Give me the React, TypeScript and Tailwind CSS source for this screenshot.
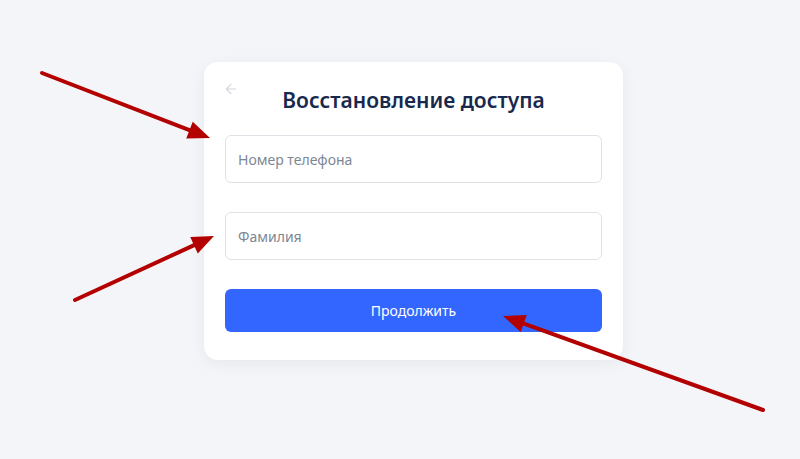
import { ArrowLeft } from "lucide-react";

const Arrow = ({ x1, y1, x2, y2 }: { x1: number; y1: number; x2: number; y2: number }) => {
  const dx = x2 - x1;
  const dy = y2 - y1;
  const len = Math.hypot(dx, dy);
  const ux = dx / len;
  const uy = dy / len;
  // arrow head
  const hl = 22;
  const hw = 9;
  const bx = x2 - ux * hl;
  const by = y2 - uy * hl;
  const p1 = `${bx - uy * hw},${by + ux * hw}`;
  const p2 = `${bx + uy * hw},${by - ux * hw}`;
  return (
    <g>
      <line x1={x1} y1={y1} x2={bx + ux * 2} y2={by + uy * 2} stroke="#b30000" strokeWidth={4} strokeLinecap="round" />
      <polygon points={`${x2},${y2} ${p1} ${p2}`} fill="#b30000" />
    </g>
  );
};

const App = () => {
  return (
    <div className="relative w-[800px] h-[459px] bg-[#f4f5f8] overflow-hidden" style={{ fontFamily: '"Noto Sans", sans-serif' }}>
      <div className="flex justify-center pt-[62px] pl-[27px]">
        {/* Card */}
        <div className="w-[419px] bg-white rounded-[14px] shadow-[0_4px_16px_rgba(30,40,70,0.06)] px-[21px] pt-[22px] pb-[28px]">
          <div className="relative flex justify-center h-[32px]">
            <ArrowLeft className="absolute left-[-2px] top-[-3px] text-[#cfd4dc]" size={16} strokeWidth={1.6} />
            <h1 className="text-[21px] leading-[32px] font-semibold text-[#18294d]">Восстановление доступа</h1>
          </div>
          <div className="flex flex-col gap-[29px] mt-[19px]">
            <input
              placeholder="Номер телефона"
              className="h-[48px] w-full rounded-[6px] border border-[#dfe2e7] px-[12px] text-[14px] text-[#1f2937] placeholder:text-[#7d8794] outline-none"
            />
            <input
              placeholder="Фамилия"
              className="h-[48px] w-full rounded-[6px] border border-[#dfe2e7] px-[12px] text-[14px] text-[#1f2937] placeholder:text-[#7d8794] outline-none"
            />
            <button className="h-[43px] w-full rounded-[6px] bg-[#3366ff] text-white text-[14px] font-normal">
              Продолжить
            </button>
          </div>
        </div>
      </div>

      {/* Annotation arrows */}
      <svg className="absolute inset-0 pointer-events-none" width={800} height={459}>
        <Arrow x1={42} y1={73} x2={210} y2={138} />
        <Arrow x1={75} y1={300} x2={214} y2={236} />
        <Arrow x1={763} y1={410} x2={503} y2={316} />
      </svg>
    </div>
  );
};

export default App;
